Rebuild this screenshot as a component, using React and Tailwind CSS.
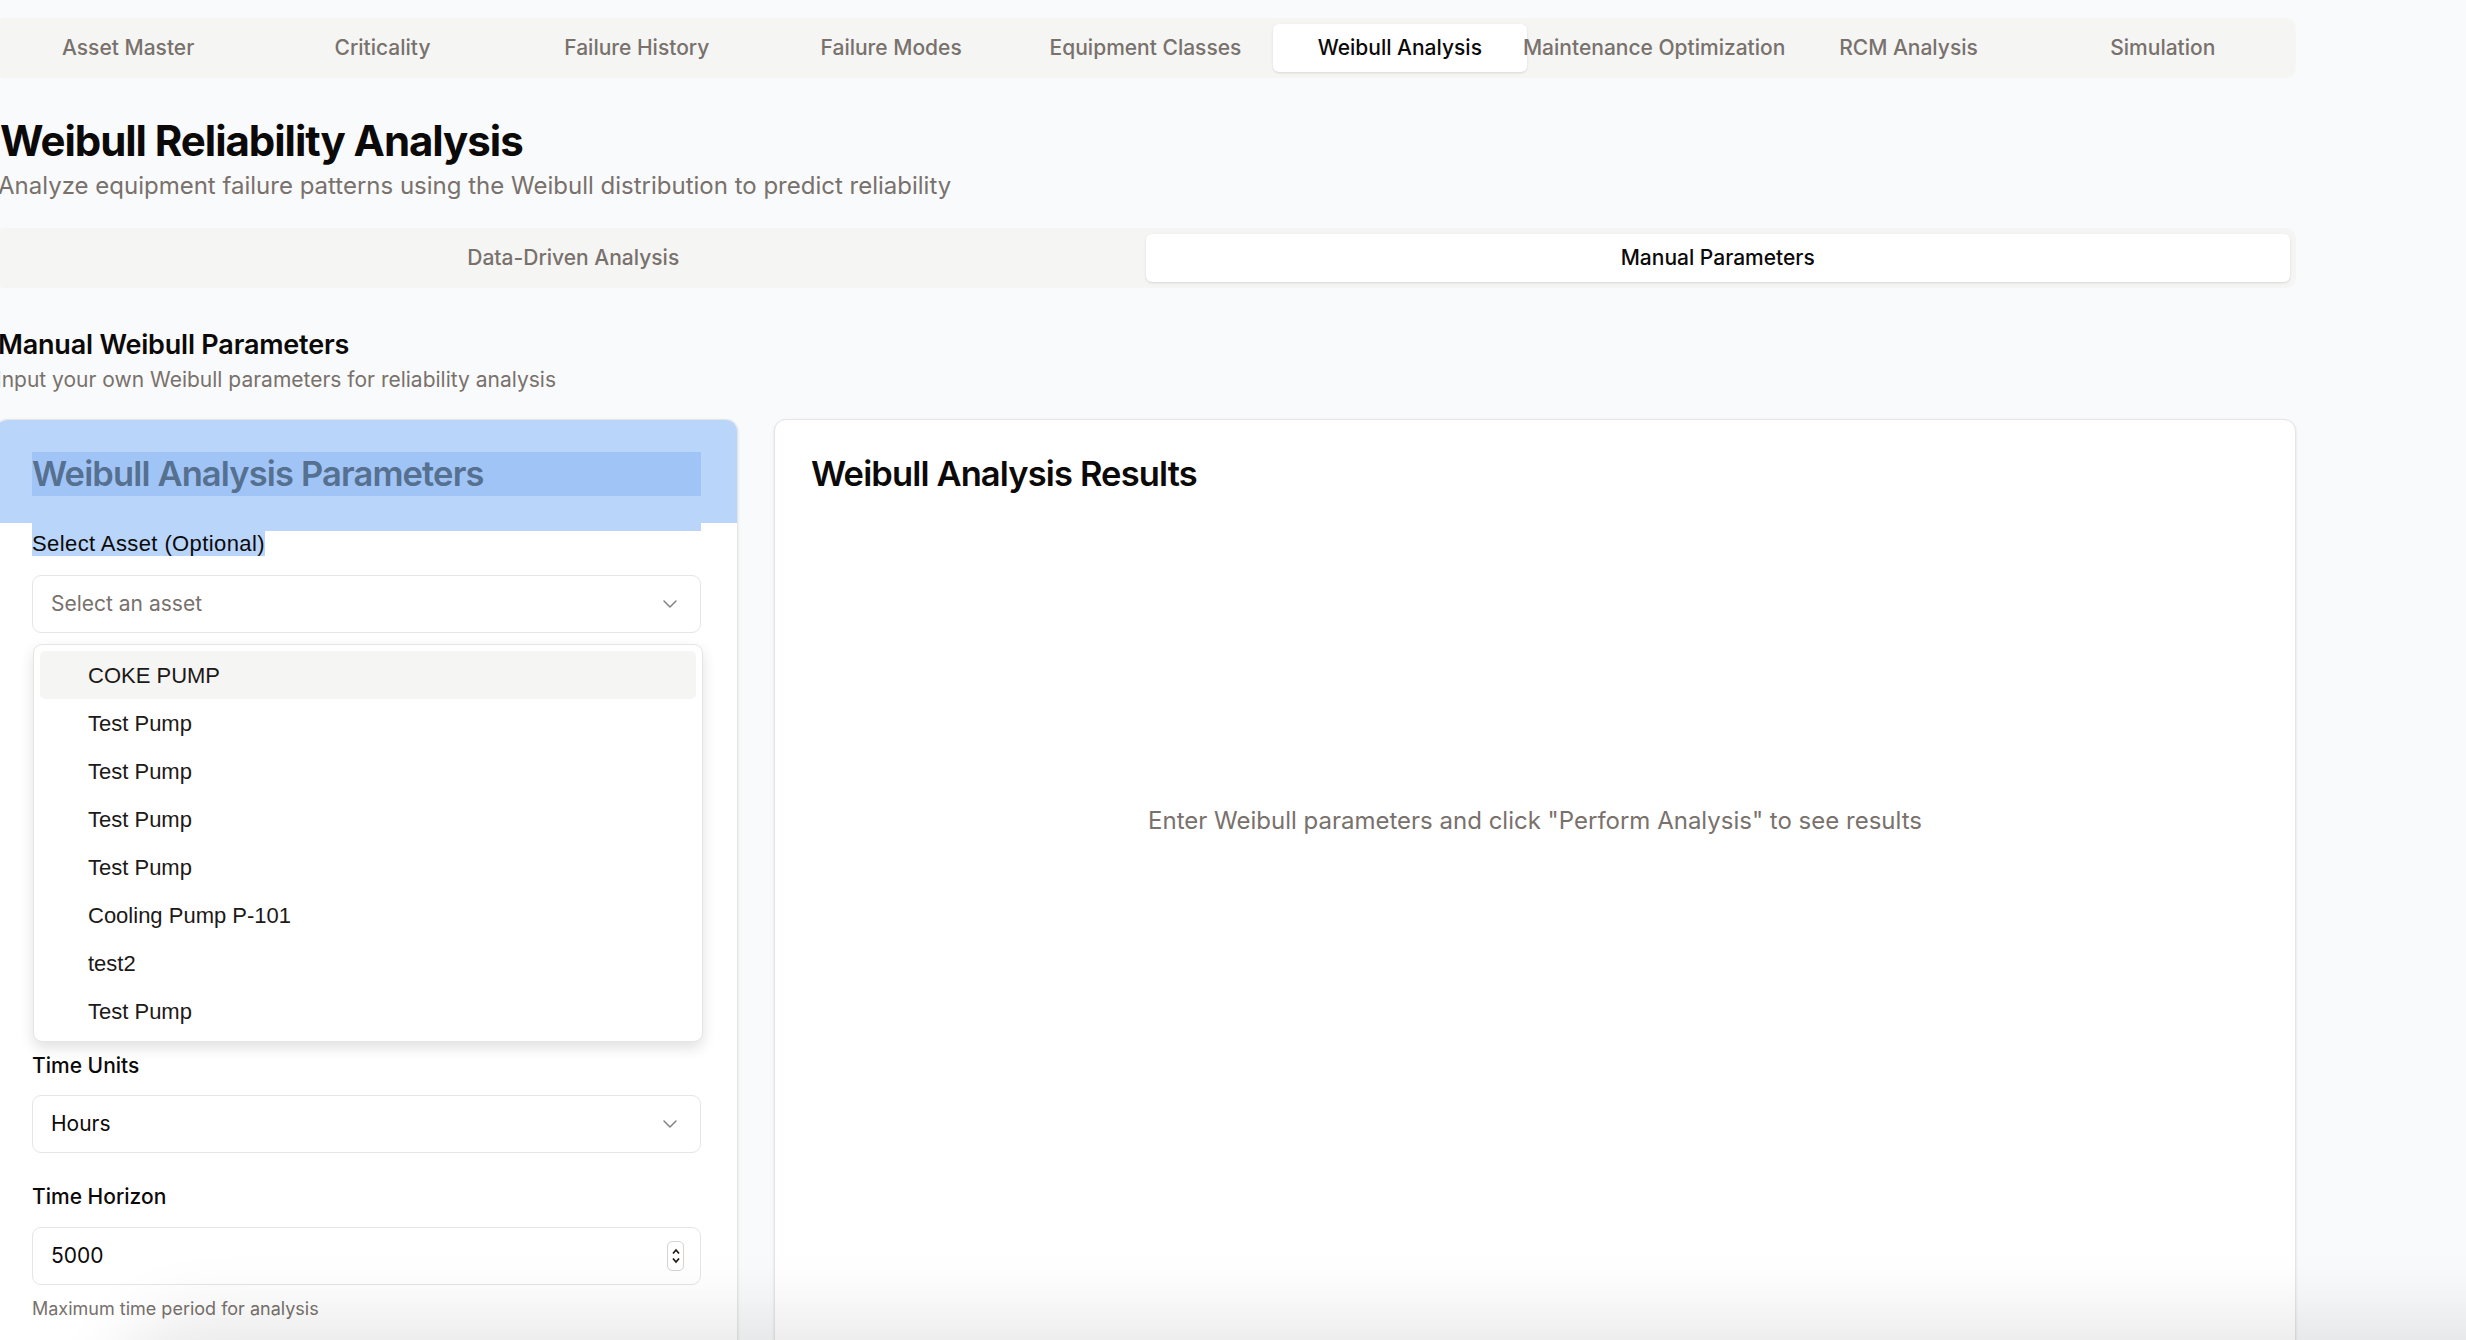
import { ChevronDown } from 'lucide-react';

const tabs = [
    'Asset Master',
    'Criticality',
    'Failure History',
    'Failure Modes',
    'Equipment Classes',
    'Weibull Analysis',
    'Maintenance Optimization',
    'RCM Analysis',
    'Simulation',
];

const assets = [
    'COKE PUMP',
    'Test Pump',
    'Test Pump',
    'Test Pump',
    'Test Pump',
    'Cooling Pump P-101',
    'test2',
    'Test Pump',
];

function Label({ children }) {
    return <div className="text-[21px] leading-[30px] font-medium text-[#0c0a09]">{children}</div>;
}

function SelectBox({ value, placeholder, className = 'mt-[14px]' }) {
    return (
        <div className={`${className} h-[58px] flex items-center justify-between rounded-[9px] border border-[#e7e5e4] bg-white px-[18px] text-[21px]`}>
            <span className={value ? 'text-[#0c0a09]' : 'text-[#78716c]'}>{value || placeholder}</span>
            <ChevronDown className="w-[24px] h-[24px] opacity-50" strokeWidth={1.5} />
        </div>
    );
}

function Field({ label, value, placeholder, hidden }) {
    return (
        <div className={hidden ? 'invisible' : ''}>
            <Label>{label}</Label>
            <SelectBox value={value} placeholder={placeholder} />
        </div>
    );
}

export default function App() {
    return (
        <div className="min-h-screen h-[1340px] overflow-hidden relative bg-[#f9fafb] text-[#0c0a09]" style={{ fontFamily: 'Inter, "Noto Sans", sans-serif' }}>
            <div className="ml-[-5px] w-[2301px] pt-[18px]">
                {/* Main module tabs */}
                <div className="grid grid-cols-9 h-[60px] p-[6px] items-center bg-[#f5f5f4] rounded-[10px]">
                    {tabs.map((t) => (
                        <div
                            key={t}
                            className={`h-[48px] flex items-center justify-center whitespace-nowrap rounded-[6px] text-[21px] font-medium ${t === 'Weibull Analysis' ? 'bg-white text-[#0c0a09] shadow-sm' : 'text-[#78716c]'}`}
                        >
                            {t}
                        </div>
                    ))}
                </div>

                <h1 className="mt-[38px] text-[42px] leading-[50px] font-bold tracking-tight pl-[5px]">Weibull Reliability Analysis</h1>
                <p className="mt-[2px] text-[24px] leading-[36px] text-[#78716c] pl-[3px]">
                    Analyze equipment failure patterns using the Weibull distribution to predict reliability
                </p>

                {/* Analysis mode tabs */}
                <div className="mt-[24px] grid grid-cols-2 h-[60px] p-[6px] items-center bg-[#f5f5f4] rounded-[10px]">
                    <div className="h-[48px] flex items-center justify-center text-[21px] font-medium text-[#78716c]">Data-Driven Analysis</div>
                    <div className="h-[48px] flex items-center justify-center rounded-[6px] bg-white shadow-sm text-[21px] font-medium">Manual Parameters</div>
                </div>

                <h2 className="mt-[39px] text-[27px] leading-[36px] font-semibold tracking-[-0.2px] pl-[3px]">Manual Weibull Parameters</h2>
                <p className="mt-[2px] text-[21px] leading-[30px] text-[#78716c] pl-[1px]">Input your own Weibull parameters for reliability analysis</p>

                <div className="mt-[24px] grid grid-cols-3 gap-[36px]">
                    {/* Parameters card */}
                    <div className="relative col-span-1 h-[1000px] rounded-[12px] border border-[#e7e5e4] bg-white shadow-sm">
                        <div className="rounded-t-[11px] bg-[#b9d5fa] p-[36px] pb-[35px]">
                            <h3 className="h-[36px] text-[34.5px] leading-[36px] font-semibold tracking-tight">
                                <span className="block -my-[4px] py-[4px] bg-[#a1c4f7] text-[#56708f]">Weibull Analysis Parameters</span>
                            </h3>
                        </div>
                        <div className="px-[36px] pb-[36px]">
                            <div className="h-[8px] bg-[#b9d5fa]" />
                            <div className="text-[22px] leading-[25px] tracking-[0.4px]" style={{ fontFamily: '"Liberation Sans", Arial, sans-serif' }}>
                                <span className="bg-[#b9d5fa]">Select Asset (Optional)</span>
                            </div>
                            <SelectBox placeholder="Select an asset" className="mt-[19px]" />

                            <div className="mt-[28px] flex flex-col gap-[28px]">
                                <Field label="Shape Parameter (β)" value="2.5" hidden />
                                <Field label="Scale Parameter (η)" value="1000" hidden />
                                <Field label="Location Parameter (γ)" value="0" hidden />
                                <Field label="Time Units" value="Hours" />
                                <div className="mt-[1px]">
                                    <Label>Time Horizon</Label>
                                    <div className="mt-[15px] h-[58px] flex items-center justify-between rounded-[9px] border border-[#e7e5e4] bg-white pl-[18px] pr-[16px] text-[21px]">
                                        <span>5000</span>
                                        <div className="w-[17px] h-[30px] flex flex-col items-center justify-center rounded-[5px] border border-[#d6d3d1] bg-white">
                                            <svg width="10" height="9" viewBox="0 0 10 9" fill="none" stroke="#1c1917" strokeWidth="1.7"><path d="M2 6.5 L5 3 L8 6.5" /></svg>
                                            <svg width="10" height="9" viewBox="0 0 10 9" fill="none" stroke="#1c1917" strokeWidth="1.7"><path d="M2 2.5 L5 6 L8 2.5" /></svg>
                                        </div>
                                    </div>
                                    <p className="mt-[12px] text-[18px] leading-[24px] text-[#78716c]">Maximum time period for analysis</p>
                                </div>
                            </div>
                        </div>

                        {/* Open asset dropdown */}
                        <div
                            className="absolute left-[37px] top-[224px] w-[670px] rounded-[9px] border border-[#e7e5e4] bg-white p-[6px] shadow-[0_6px_14px_rgba(0,0,0,0.12)]"
                            style={{ fontFamily: '"Liberation Sans", Arial, sans-serif' }}
                        >
                            {assets.map((a, i) => (
                                <div
                                    key={i}
                                    className={`h-[48px] flex items-center pl-[48px] rounded-[5px] text-[22px] text-[#1c1917] ${i === 0 ? 'bg-[#f5f5f4]' : ''}`}
                                >
                                    {a}
                                </div>
                            ))}
                        </div>
                    </div>

                    {/* Results card */}
                    <div className="col-span-2 h-[1000px] rounded-[12px] border border-[#e7e5e4] bg-white shadow-sm">
                        <div className="p-[36px]">
                            <h3 className="h-[36px] text-[34.5px] leading-[36px] font-semibold tracking-tight">Weibull Analysis Results</h3>
                        </div>
                        <div className="pt-[275px] text-center text-[24px] leading-[36px] text-[#78716c]">
                            Enter Weibull parameters and click "Perform Analysis" to see results
                        </div>
                    </div>
                </div>
            </div>

            {/* shadow from panel sitting just under the viewport */}
            <div className="absolute left-[140px] right-[-200px] top-[1345px] h-[200px] rounded-[60px] bg-[#e9e9e9] shadow-[0_0_70px_30px_rgba(0,0,0,0.09)]" />
        </div>
    );
}
